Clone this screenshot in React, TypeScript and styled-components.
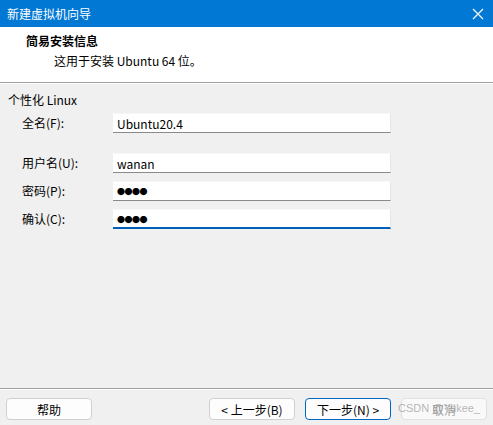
import React from "react";
import styled, { createGlobalStyle } from "styled-components";

const GlobalStyle = createGlobalStyle`
  html, body {
    margin: 0;
    padding: 0;
    background: #f0f0f0;
  }
  body {
    font-family: "Segoe UI", "Noto Sans CJK SC", "Noto Sans", sans-serif;
    font-size: 12px;
    color: #000;
  }
`;

interface Field {
  label: string;
  value: string;
  secret?: boolean;
  focused?: boolean;
  spaced?: boolean;
}

const fields: Field[] = [
  { label: "全名(F):", value: "Ubuntu20.4" },
  { label: "用户名(U):", value: "wanan", spaced: true },
  { label: "密码(P):", value: "●●●●", secret: true },
  { label: "确认(C):", value: "●●●●", secret: true, focused: true },
];

const App: React.FC = () => {
  return (
    <Window>
      <GlobalStyle />
      <TitleBar>
        <Title>新建虚拟机向导</Title>
        <CloseIcon width="12" height="12" viewBox="0 0 12 12">
          <path d="M1 1 L11 11 M11 1 L1 11" stroke="#fff" strokeWidth="1.2" />
        </CloseIcon>
      </TitleBar>

      <Header>
        <Heading>简易安装信息</Heading>
        <SubHeading>这用于安装 Ubuntu 64 位。</SubHeading>
      </Header>

      <Body>
        <GroupLabel>个性化 Linux</GroupLabel>
        <Form>
          {fields.map((f) => (
            <Row key={f.label} $spaced={f.spaced}>
              <Label>{f.label}</Label>
              <Input $focused={f.focused} $secret={f.secret}>
                {f.value}
              </Input>
            </Row>
          ))}
        </Form>
      </Body>

      <Footer>
        <Button>帮助</Button>
        <Spacer />
        <Button>&lt; 上一步(B)</Button>
        <Button $primary>下一步(N) &gt;</Button>
        <CancelWrap>
          <Button $disabled>取消</Button>
          <Watermark>CSDN @Yukee_</Watermark>
        </CancelWrap>
      </Footer>
    </Window>
  );
};

export default App;

// Styles
const Window = styled.div`
  display: flex;
  flex-direction: column;
  width: 493px;
  height: 425px;
  background: #f0f0f0;
  overflow: hidden;
`;

const TitleBar = styled.div`
  display: flex;
  align-items: center;
  justify-content: space-between;
  height: 27px;
  padding: 0 7px 0 7px;
  background: #0078d4;
  box-sizing: border-box;
`;

const Title = styled.div`
  color: #fff;
  font-size: 12px;
  line-height: 16px;
`;

const CloseIcon = styled.svg`
  margin-right: 2px;
  margin-top: 1px;
`;

const Header = styled.div`
  display: flex;
  flex-direction: column;
  height: 56px;
  padding: 6px 0 0 26px;
  box-sizing: border-box;
  background: #fff;
  border-bottom: 1px solid #a0a0a0;
`;

const Heading = styled.div`
  font-weight: bold;
  font-size: 12px;
  line-height: 16px;
`;

const SubHeading = styled.div`
  margin: 4px 0 0 28px;
  font-size: 12px;
  line-height: 16px;
`;

const Body = styled.div`
  flex: 1;
  display: flex;
  flex-direction: column;
  padding: 8px 0 0 8px;
  border-top: 1px solid #fff;
`;

const GroupLabel = styled.div`
  line-height: 16px;
`;

const Form = styled.div`
  display: flex;
  flex-direction: column;
  gap: 8px;
  margin-top: 5px;
  padding-left: 14px;
`;

const Row = styled.div<{ $spaced?: boolean }>`
  display: grid;
  grid-template-columns: 91px 278px;
  align-items: center;
  margin-top: ${({ $spaced }) => ($spaced ? "12px" : "0")};
`;

const Label = styled.div`
  line-height: 16px;
`;

const Input = styled.div<{ $focused?: boolean; $secret?: boolean }>`
  height: 20px;
  box-sizing: border-box;
  background: #fff;
  padding: 0 4px;
  line-height: 19px;
  font-size: ${({ $secret }) => ($secret ? "8px" : "12px")};
  letter-spacing: ${({ $secret }) => ($secret ? "-0.5px" : "0")};
  border-bottom: ${({ $focused }) =>
    $focused ? "2px solid #005fb8" : "1px solid #8a8a8a"};
  border-right: 1px solid #e5e5e5;
  border-top: 1px solid #f7f7f7;
`;

const Footer = styled.div`
  display: flex;
  align-items: flex-start;
  gap: 10px;
  height: 37px;
  padding: 9px 6px 0 6px;
  box-sizing: border-box;
  border-top: 1px solid #a0a0a0;
  box-shadow: inset 0 1px 0 #fff;
`;

const Spacer = styled.div`
  flex: 1;
`;

const Button = styled.div<{ $primary?: boolean; $disabled?: boolean }>`
  width: 86px;
  height: 22px;
  box-sizing: border-box;
  display: flex;
  align-items: center;
  justify-content: center;
  background: ${({ $disabled }) => ($disabled ? "#f9f9f9" : "#fdfdfd")};
  border: 1px solid
    ${({ $primary, $disabled }) =>
      $primary ? "#0067c0" : $disabled ? "#e0e0e0" : "#d0d0d0"};
  border-radius: 4px;
  color: ${({ $disabled }) => ($disabled ? "#a0a0a0" : "#000")};
  font-size: 12px;
`;

const CancelWrap = styled.div`
  position: relative;
`;

const Watermark = styled.div`
  position: absolute;
  left: -3px;
  top: 4px;
  color: rgba(150, 150, 150, 0.7);
  font-family: "Liberation Sans", Arial, sans-serif;
  font-size: 11px;
  white-space: nowrap;
  pointer-events: none;
`;
